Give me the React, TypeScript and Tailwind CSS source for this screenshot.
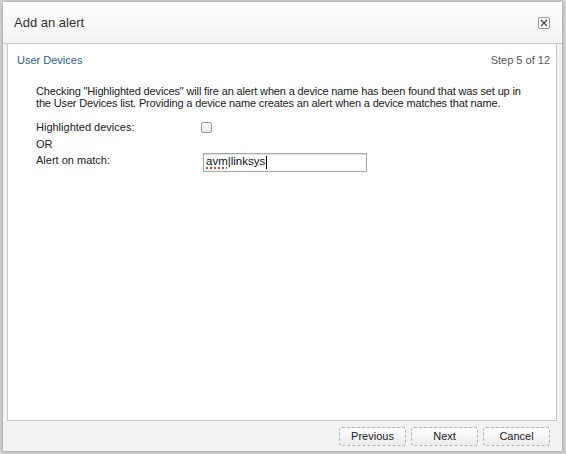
export default function App() {
  return (
    <div className="flex h-[454px] w-[566px] bg-[#cfcfcf] pl-[3px] pt-[2px] font-['Liberation_Sans',Arial,sans-serif] text-[11px] text-[#222]">
      <div className="flex h-[449px] w-[559px] flex-col rounded-t-[3px] bg-[#f2f2f1] shadow-[0_0_3px_rgba(0,0,0,0.35)]">
        <div className="flex h-[42px] items-center justify-between border-b border-[#c9c9c9] bg-gradient-to-b from-white to-[#f3f3f3] pl-[11px] pr-[12px]">
          <h1 className="text-[13px] text-[#333]">Add an alert</h1>
          <button className="flex h-[12px] w-[12px] items-center justify-center rounded-[2px] border border-[#9a9a9a] bg-white">
            <svg width="8" height="8" viewBox="0 0 8 8" className="text-[#444]">
              <path d="M1 1L7 7M7 1L1 7" stroke="currentColor" strokeWidth="1.3" />
            </svg>
          </button>
        </div>

        <div className="ml-[4px] mr-[5px] flex-1 border-x border-b border-[#c8c8c8] bg-white pl-[9px] pr-[6px] pt-[8px]">
          <div className="flex items-center justify-between">
            <span className="text-[#2f5d8c]">User Devices</span>
            <span className="text-[#555]">Step 5 of 12</span>
          </div>

          <div className="pl-[19px] pt-[16px]">
            <p className="leading-[12px] tracking-[-0.15px]">
              Checking "Highlighted devices" will fire an alert when a device name has been found that was set up in
              <br />
              the User Devices list. Providing a device name creates an alert when a device matches that name.
            </p>

            <div className="mt-[12px] flex h-[14px] items-center">
              <span className="w-[165px]">Highlighted devices:</span>
              <span className="h-[11px] w-[11px] rounded-[2px] border border-[#9b9b9b] bg-gradient-to-b from-white to-[#e9e9e9]" />
            </div>
            <div className="mt-[2px] h-[14px] leading-[14px]">OR</div>
            <div className="mt-[2px] flex items-start">
              <span className="w-[167px] leading-[14px]">Alert on match:</span>
              <div className="flex h-[19px] w-[164px] items-center border border-[#a9a9a9] bg-white pl-[2px] text-[11.5px] text-[#111] shadow-[inset_0_1px_1px_rgba(0,0,0,0.12)]">
                <span className="underline decoration-[#e0443a] decoration-dotted decoration-[2px] underline-offset-2">avm</span>
                <span>|linksys</span>
                <span className="ml-[1px] h-[13px] w-px bg-black" />
              </div>
            </div>
          </div>
        </div>

        <div className="flex h-[30px] items-center justify-end gap-[5px] pr-[12px]">
          {["Previous", "Next", "Cancel"].map((label) => (
            <button
              key={label}
              className="h-[19px] w-[67px] rounded-[3px] border border-dashed border-[#b3b3b3] bg-gradient-to-b from-white to-[#ececec] text-[11px] text-[#222]"
            >
              {label}
            </button>
          ))}
        </div>
      </div>
    </div>
  );
}
